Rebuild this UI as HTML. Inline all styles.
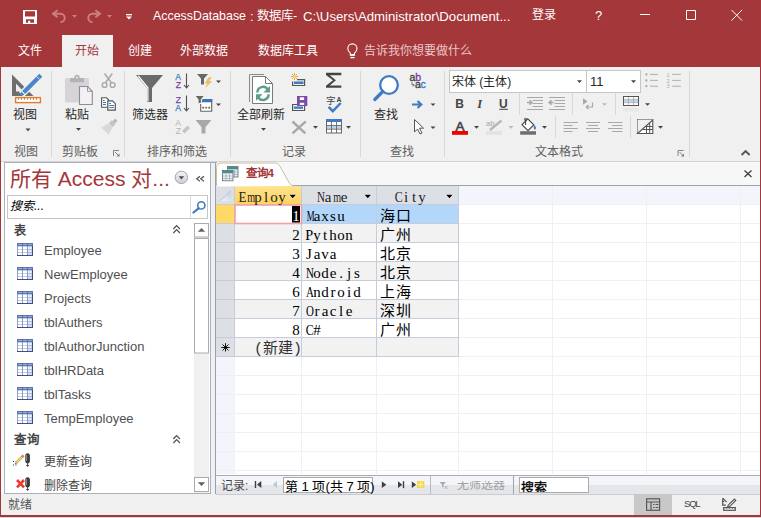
<!DOCTYPE html>
<html lang="zh-CN">
<head>
<meta charset="utf-8">
<style>
*{box-sizing:border-box;margin:0;padding:0}
html,body{width:761px;height:518px;overflow:hidden;background:#F0F0F0;font-family:"Liberation Sans",sans-serif;font-size:12px;color:#262626}
.a{position:absolute;white-space:nowrap;line-height:1}
.wt{color:#fff;font-size:12px}
.bt{font-size:12px;color:#262626}
.gl{font-size:12px;color:#5E5E5E}
.mono{font-family:"Liberation Mono",monospace;font-size:15px;letter-spacing:-1px;color:#000}
.mc{display:inline-block;transform-origin:50% 50%;width:8px;text-align:center;font-family:"Liberation Serif",serif;font-size:15px;letter-spacing:0}
.cj{font-size:15px;letter-spacing:1px}
svg{position:absolute;left:0;top:0}
</style>
</head>
<body>
<!-- title + tabs -->
<div class="a" style="left:0;top:0;width:761px;height:67px;background:#A4373A"></div>
<div class="a" style="left:62px;top:35px;width:51px;height:33px;background:#F0F0F0"></div>
<!-- ribbon -->
<div class="a" style="left:0;top:67px;width:761px;height:94px;background:#F0F0F0"></div>
<div class="a" style="left:0;top:161px;width:761px;height:1px;background:#D5D5D5"></div>
<!-- ribbon separators -->
<div class="a" style="left:51px;top:71px;width:1px;height:86px;background:#D8D8D8"></div>
<div class="a" style="left:124px;top:71px;width:1px;height:86px;background:#D8D8D8"></div>
<div class="a" style="left:230px;top:71px;width:1px;height:86px;background:#D8D8D8"></div>
<div class="a" style="left:360px;top:71px;width:1px;height:86px;background:#D8D8D8"></div>
<div class="a" style="left:444px;top:71px;width:1px;height:86px;background:#D8D8D8"></div>
<div class="a" style="left:689px;top:71px;width:1px;height:86px;background:#D8D8D8"></div>
<div class="a" style="left:519px;top:93px;width:1px;height:22px;background:#D8D8D8"></div>
<div class="a" style="left:572px;top:93px;width:1px;height:22px;background:#D8D8D8"></div>
<div class="a" style="left:615px;top:93px;width:1px;height:22px;background:#D8D8D8"></div>
<div class="a" style="left:555px;top:116px;width:1px;height:22px;background:#D8D8D8"></div>
<div class="a" style="left:630px;top:116px;width:1px;height:22px;background:#D8D8D8"></div>

<!-- nav pane -->
<div class="a" style="left:1px;top:162px;width:3px;height:332px;background:#FAFAFA"></div>
<div class="a" style="left:4px;top:162px;width:207px;height:332px;background:#fff;border-left:1px solid #A9B1BB;border-top:1px solid #A9B1BB;border-right:1px solid #A9B1BB;border-bottom:1px solid #A9B1BB"></div>
<!-- splitter -->
<div class="a" style="left:211px;top:162px;width:4px;height:332px;background:#EEF0F3"></div>
<!-- doc area -->
<div class="a" style="left:215px;top:162px;width:545px;height:332px;background:#fff;border-left:1px solid #98A0AA"></div>
<div class="a" style="left:211px;top:162px;width:6px;height:1px;background:#A3ABB5"></div>
<div class="a" style="left:217px;top:162px;width:543px;height:1px;background:#F9F9F9"></div>
<!-- tab strip -->
<div class="a" style="left:216px;top:163px;width:544px;height:23px;background:#F7F7F7;border-bottom:1px solid #9DA3AB"></div>

<!-- datasheet -->
<div class="a" style="left:216px;top:186px;width:544px;height:19px;background:#F4F5FC"></div>
<div class="a" style="left:216px;top:205px;width:19px;height:269px;background:#F4F5FC"></div>
<!-- header cells -->
<div class="a" style="left:216px;top:186px;width:19px;height:19px;background:#DCDFE4;border-right:1px solid #C6CDDA;border-bottom:1px solid #C6CDDA"></div>
<div class="a" style="left:235px;top:186px;width:67px;height:19px;background:linear-gradient(#FFE28E,#FFD460);border-right:1px solid #C6CDDA;border-bottom:1px solid #C6CDDA"></div>
<div class="a" style="left:302px;top:186px;width:75px;height:19px;background:#DCDFE4;border-right:1px solid #C6CDDA;border-bottom:1px solid #C6CDDA"></div>
<div class="a" style="left:377px;top:186px;width:82px;height:19px;background:#DCDFE4;border-right:1px solid #C6CDDA;border-bottom:1px solid #C6CDDA"></div>
<!-- rows -->
<div class="a" style="left:216px;top:205px;width:19px;height:19px;background:#FFD966;border-right:1px solid #C6CDDA;border-bottom:1px solid #C6CDDA"></div>
<div class="a" style="left:235px;top:205px;width:67px;height:19px;background:#FFFFFF;border-right:1px solid #C6CDDA;border-bottom:1px solid #C6CDDA"></div>
<div class="a" style="left:302px;top:205px;width:75px;height:19px;background:#B3D7FB;border-right:1px solid #C6CDDA;border-bottom:1px solid #C6CDDA"></div>
<div class="a" style="left:377px;top:205px;width:82px;height:19px;background:#B3D7FB;border-right:1px solid #C6CDDA;border-bottom:1px solid #C6CDDA"></div>
<div class="a" style="left:216px;top:224px;width:19px;height:19px;background:#DCDFE4;border-right:1px solid #C6CDDA;border-bottom:1px solid #C6CDDA"></div>
<div class="a" style="left:235px;top:224px;width:67px;height:19px;background:#F2F2F2;border-right:1px solid #C6CDDA;border-bottom:1px solid #C6CDDA"></div>
<div class="a" style="left:302px;top:224px;width:75px;height:19px;background:#F2F2F2;border-right:1px solid #C6CDDA;border-bottom:1px solid #C6CDDA"></div>
<div class="a" style="left:377px;top:224px;width:82px;height:19px;background:#F2F2F2;border-right:1px solid #C6CDDA;border-bottom:1px solid #C6CDDA"></div>
<div class="a" style="left:216px;top:243px;width:19px;height:19px;background:#DCDFE4;border-right:1px solid #C6CDDA;border-bottom:1px solid #C6CDDA"></div>
<div class="a" style="left:235px;top:243px;width:67px;height:19px;background:#FFFFFF;border-right:1px solid #C6CDDA;border-bottom:1px solid #C6CDDA"></div>
<div class="a" style="left:302px;top:243px;width:75px;height:19px;background:#FFFFFF;border-right:1px solid #C6CDDA;border-bottom:1px solid #C6CDDA"></div>
<div class="a" style="left:377px;top:243px;width:82px;height:19px;background:#FFFFFF;border-right:1px solid #C6CDDA;border-bottom:1px solid #C6CDDA"></div>
<div class="a" style="left:216px;top:262px;width:19px;height:19px;background:#DCDFE4;border-right:1px solid #C6CDDA;border-bottom:1px solid #C6CDDA"></div>
<div class="a" style="left:235px;top:262px;width:67px;height:19px;background:#F2F2F2;border-right:1px solid #C6CDDA;border-bottom:1px solid #C6CDDA"></div>
<div class="a" style="left:302px;top:262px;width:75px;height:19px;background:#F2F2F2;border-right:1px solid #C6CDDA;border-bottom:1px solid #C6CDDA"></div>
<div class="a" style="left:377px;top:262px;width:82px;height:19px;background:#F2F2F2;border-right:1px solid #C6CDDA;border-bottom:1px solid #C6CDDA"></div>
<div class="a" style="left:216px;top:281px;width:19px;height:19px;background:#DCDFE4;border-right:1px solid #C6CDDA;border-bottom:1px solid #C6CDDA"></div>
<div class="a" style="left:235px;top:281px;width:67px;height:19px;background:#FFFFFF;border-right:1px solid #C6CDDA;border-bottom:1px solid #C6CDDA"></div>
<div class="a" style="left:302px;top:281px;width:75px;height:19px;background:#FFFFFF;border-right:1px solid #C6CDDA;border-bottom:1px solid #C6CDDA"></div>
<div class="a" style="left:377px;top:281px;width:82px;height:19px;background:#FFFFFF;border-right:1px solid #C6CDDA;border-bottom:1px solid #C6CDDA"></div>
<div class="a" style="left:216px;top:300px;width:19px;height:19px;background:#DCDFE4;border-right:1px solid #C6CDDA;border-bottom:1px solid #C6CDDA"></div>
<div class="a" style="left:235px;top:300px;width:67px;height:19px;background:#F2F2F2;border-right:1px solid #C6CDDA;border-bottom:1px solid #C6CDDA"></div>
<div class="a" style="left:302px;top:300px;width:75px;height:19px;background:#F2F2F2;border-right:1px solid #C6CDDA;border-bottom:1px solid #C6CDDA"></div>
<div class="a" style="left:377px;top:300px;width:82px;height:19px;background:#F2F2F2;border-right:1px solid #C6CDDA;border-bottom:1px solid #C6CDDA"></div>
<div class="a" style="left:216px;top:319px;width:19px;height:19px;background:#DCDFE4;border-right:1px solid #C6CDDA;border-bottom:1px solid #C6CDDA"></div>
<div class="a" style="left:235px;top:319px;width:67px;height:19px;background:#FFFFFF;border-right:1px solid #C6CDDA;border-bottom:1px solid #C6CDDA"></div>
<div class="a" style="left:302px;top:319px;width:75px;height:19px;background:#FFFFFF;border-right:1px solid #C6CDDA;border-bottom:1px solid #C6CDDA"></div>
<div class="a" style="left:377px;top:319px;width:82px;height:19px;background:#FFFFFF;border-right:1px solid #C6CDDA;border-bottom:1px solid #C6CDDA"></div>
<div class="a" style="left:216px;top:338px;width:19px;height:19px;background:#DCDFE4;border-right:1px solid #C6CDDA;border-bottom:1px solid #C6CDDA"></div>
<div class="a" style="left:235px;top:338px;width:67px;height:19px;background:#F2F2F2;border-right:1px solid #C6CDDA;border-bottom:1px solid #C6CDDA"></div>
<div class="a" style="left:302px;top:338px;width:75px;height:19px;background:#F2F2F2;border-right:1px solid #C6CDDA;border-bottom:1px solid #C6CDDA"></div>
<div class="a" style="left:377px;top:338px;width:82px;height:19px;background:#F2F2F2;border-right:1px solid #C6CDDA;border-bottom:1px solid #C6CDDA"></div>
<div class="a" style="left:216px;top:375px;width:544px;height:1px;background:#EEF0F4"></div>
<div class="a" style="left:216px;top:394px;width:544px;height:1px;background:#EEF0F4"></div>
<div class="a" style="left:216px;top:413px;width:544px;height:1px;background:#EEF0F4"></div>
<div class="a" style="left:216px;top:432px;width:544px;height:1px;background:#EEF0F4"></div>
<div class="a" style="left:216px;top:451px;width:544px;height:1px;background:#EEF0F4"></div>
<div class="a" style="left:216px;top:470px;width:544px;height:1px;background:#EEF0F4"></div>
<div class="a" style="left:234px;top:357px;width:1px;height:117px;background:#EEF0F4"></div>
<div class="a" style="left:301px;top:357px;width:1px;height:117px;background:#EEF0F4"></div>
<div class="a" style="left:376px;top:357px;width:1px;height:117px;background:#EEF0F4"></div>
<div class="a" style="left:458px;top:357px;width:1px;height:117px;background:#EEF0F4"></div>
<div class="a" style="left:552px;top:186px;width:1px;height:288px;background:#EEF0F4"></div>
<div class="a" style="left:646px;top:186px;width:1px;height:288px;background:#EEF0F4"></div>
<div class="a" style="left:740px;top:186px;width:1px;height:288px;background:#EEF0F4"></div>
<div class="a" style="left:459px;top:204px;width:301px;height:1px;background:#EEF0F4"></div>
<div class="a" style="left:459px;top:223px;width:301px;height:1px;background:#EEF0F4"></div>
<div class="a" style="left:459px;top:242px;width:301px;height:1px;background:#EEF0F4"></div>
<div class="a" style="left:459px;top:261px;width:301px;height:1px;background:#EEF0F4"></div>
<div class="a" style="left:459px;top:280px;width:301px;height:1px;background:#EEF0F4"></div>
<div class="a" style="left:459px;top:299px;width:301px;height:1px;background:#EEF0F4"></div>
<div class="a" style="left:459px;top:318px;width:301px;height:1px;background:#EEF0F4"></div>
<div class="a" style="left:459px;top:337px;width:301px;height:1px;background:#EEF0F4"></div>
<div class="a" style="left:459px;top:356px;width:301px;height:1px;background:#EEF0F4"></div><svg width="761" height="518" viewBox="0 0 761 518">
<defs>
<linearGradient id="sa" x1="0" y1="1" x2="1" y2="0"><stop offset="0" stop-color="#F2F4F8"/><stop offset="1" stop-color="#C9CED8"/></linearGradient>
</defs>
<!-- select all triangle -->
<path d="M220 201L231 190.5V201z" fill="url(#sa)"/>
<path d="M220 201L231 190.5" stroke="#A8C0E0" stroke-width="0.8"/>
<!-- header arrows -->
<g fill="#000" stroke="#fff" stroke-width="0.8" paint-order="stroke">
  <path d="M289.5 194.8h6.4l-3.2 3.4z"/>
  <path d="M364.6 194.8h6.4l-3.2 3.4z"/>
  <path d="M446.2 194.8h6.4l-3.2 3.4z"/>
</g>
<!-- focus cell border -->
<rect x="235" y="205" width="66.5" height="18.5" fill="none" stroke="#F2A0A8" stroke-width="1.6"/>
<rect x="292" y="206" width="8" height="16.5" fill="#000"/>
<!-- asterisk -->
<g stroke="#111" stroke-width="1">
  <path d="M225.5 343.2v8.3 M221.3 347.5h8.4 M222.5 344.5l6 6 M228.5 344.5l-6 6"/>
</g>
</svg>
<div class="a mono" style="left:292px;top:209px;color:#fff;"><span class="mc">1</span></div>
<div class="a mono" style="left:305px;top:209px"><span class="mc" style="transform:scaleX(0.592)">M</span><span class="mc">a</span><span class="mc">x</span><span class="mc">s</span><span class="mc">u</span></div>
<div class="a mono cj" style="left:380px;top:210px">海口</div>
<div class="a mono" style="left:292px;top:228px;"><span class="mc">2</span></div>
<div class="a mono" style="left:305px;top:228px"><span class="mc" style="transform:scaleX(0.947)">P</span><span class="mc">y</span><span class="mc">t</span><span class="mc">h</span><span class="mc">o</span><span class="mc">n</span></div>
<div class="a mono cj" style="left:380px;top:229px">广州</div>
<div class="a mono" style="left:292px;top:247px;"><span class="mc">3</span></div>
<div class="a mono" style="left:305px;top:247px"><span class="mc">J</span><span class="mc">a</span><span class="mc">v</span><span class="mc">a</span></div>
<div class="a mono cj" style="left:380px;top:248px">北京</div>
<div class="a mono" style="left:292px;top:266px;"><span class="mc">4</span></div>
<div class="a mono" style="left:305px;top:266px"><span class="mc" style="transform:scaleX(0.730)">N</span><span class="mc">o</span><span class="mc">d</span><span class="mc">e</span><span class="mc">.</span><span class="mc">j</span><span class="mc">s</span></div>
<div class="a mono cj" style="left:380px;top:267px">北京</div>
<div class="a mono" style="left:292px;top:285px;"><span class="mc">6</span></div>
<div class="a mono" style="left:305px;top:285px"><span class="mc" style="transform:scaleX(0.730)">A</span><span class="mc">n</span><span class="mc">d</span><span class="mc">r</span><span class="mc">o</span><span class="mc">i</span><span class="mc">d</span></div>
<div class="a mono cj" style="left:380px;top:286px">上海</div>
<div class="a mono" style="left:292px;top:304px;"><span class="mc">7</span></div>
<div class="a mono" style="left:305px;top:304px"><span class="mc" style="transform:scaleX(0.730)">O</span><span class="mc">r</span><span class="mc">a</span><span class="mc">c</span><span class="mc">l</span><span class="mc">e</span></div>
<div class="a mono cj" style="left:380px;top:305px">深圳</div>
<div class="a mono" style="left:292px;top:323px;"><span class="mc">8</span></div>
<div class="a mono" style="left:305px;top:323px"><span class="mc" style="transform:scaleX(0.790)">C</span><span class="mc">#</span></div>
<div class="a mono cj" style="left:380px;top:324px">广州</div>
<div class="a mono cj" style="left:254px;top:342px;color:#333;letter-spacing:0">(新建)</div>


<!-- record nav bar -->
<div class="a" style="left:216px;top:475px;width:544px;height:19px;background:linear-gradient(#F4F5F8 0,#F4F5F8 50%,#E4E6EA 50%,#E4E6EA 100%);border-top:1px solid #A9AEB6"></div>
<div class="a" style="left:283px;top:477px;width:90px;height:16px;background:#fff;border:1px solid #ABABAB"></div>
<div class="a" style="left:430px;top:476px;width:1px;height:18px;background:#B8BCC2"></div>
<div class="a" style="left:513px;top:476px;width:1px;height:18px;background:#A0A4AA"></div>
<div class="a" style="left:519px;top:477px;width:70px;height:16px;background:#fff;border:1px solid #ABABAB"></div>

<!-- status bar -->
<div class="a" style="left:216px;top:494px;width:544px;height:1px;background:#C9CCD2"></div>
<div class="a" style="left:0;top:495px;width:761px;height:23px;background:#F0F0F0"></div>
<div class="a" style="left:0;top:494px;width:216px;height:1px;background:#F0F0F0"></div>
<div class="a" style="left:634px;top:494px;width:38px;height:22px;background:#C8C8C8"></div>

<!-- window borders -->
<div class="a" style="left:0;top:67px;width:1px;height:451px;background:#A4373A"></div>
<div class="a" style="left:760px;top:67px;width:1px;height:451px;background:#A4373A"></div>
<div class="a" style="left:0;top:515px;width:761px;height:2px;background:#A4373A"></div>
<div class="a" style="left:0;top:517px;width:761px;height:1px;background:#D8D8D8"></div>

<!-- font combos -->
<div class="a" style="left:449px;top:70px;width:138px;height:23px;background:#fff;border:1px solid #C6C6C6"></div>
<div class="a" style="left:586px;top:70px;width:55px;height:23px;background:#fff;border:1px solid #C6C6C6"></div>
<div class="a" style="left:7px;top:195px;width:201px;height:24px;border:1px solid #C6C6C6;background:#fff"></div>
<div class="a" style="left:190px;top:196px;width:1px;height:22px;background:#DADADA"></div>
<svg width="761" height="518" viewBox="0 0 761 518">
<!-- ===== title bar ===== -->
<rect x="23" y="10" width="14" height="14" fill="#fff"/>
<path d="M25 11.2h10v5.3H25z M26 19.2h8v3.6h-3.8v-2.1h-2.1v2.1H26z" fill="#A4373A"/>
<g fill="none" stroke="#CB7E80" stroke-width="2">
  <path d="M53 13.7h7.5a4.2 4.2 0 0 1 0 8.4"/>
  <path d="M57.6 10.3l-4.6 3.4 4.6 3.4"/>
  <path d="M100 13.7h-7.5a4.2 4.2 0 0 0 0 8.4"/>
  <path d="M95.4 10.3l4.6 3.4-4.6 3.4"/>
</g>
<path d="M72 15h5l-2.5 2.8z M107 15h5l-2.5 2.8z" fill="#CB7E80"/>
<rect x="126" y="14" width="6" height="1.3" fill="#fff"/>
<path d="M126 16.5h6l-3 3z" fill="#fff"/>
<g fill="none" stroke="#fff" stroke-width="1">
  <path d="M640 14.5h10"/>
  <path d="M686.5 10.5h9v9h-9z"/>
  <path d="M731.5 10l10.5 10.5 M742 10l-10.5 10.5"/>
</g>
<!-- lightbulb -->
<g fill="none" stroke="#fff" stroke-width="1.1" transform="translate(0.3,2.3)">
  <path d="M350 53v-2.2c-1.6-1.3-2.5-2.9-2.5-4.6a4.6 4.6 0 0 1 9.2 0c0 1.7-0.9 3.3-2.5 4.6V53z"/>
  <path d="M350.2 52.5h3.8" stroke-width="1.6"/>
  <path d="M350 55.3h4.2" stroke-width="1.3"/>
</g>
<!-- ===== Views: view icon ===== -->
<path d="M12 74.5L33.5 96H12z M16 83.5v8h7.5z" fill="#6E6E6E" fill-rule="evenodd"/>
<path d="M21.5 94.5L41.2 74.8" stroke="#F0F0F0" stroke-width="7"/>
<path d="M23.6 92.4L40.8 75.2" stroke="#4A86C8" stroke-width="4.3"/>
<path d="M20 96l1.2-4.6 3.4 3.4z" fill="#4A86C8"/>
<path d="M36.6 76.4l3 3" stroke="#F0F0F0" stroke-width="0.9"/>
<path d="M21.8 91l3.2 3.2" stroke="#F0F0F0" stroke-width="0.7"/>
<rect x="15.6" y="97.6" width="24.8" height="5" fill="#fff" stroke="#E07C2E" stroke-width="1.4"/>
<path d="M18.5 98v1.8 M21.5 98v1.8 M24.5 98v1.8 M27.5 98v1.8 M30.5 98v1.8 M33.5 98v1.8 M36.5 98v1.8" stroke="#E07C2E" stroke-width="1.1"/>
<path d="M25.5 128.5h5l-2.5 2.8z" fill="#444"/>

<!-- ===== clipboard ===== -->
<rect x="65" y="78" width="24" height="24.5" rx="1.5" fill="#D6D4D8"/>
<path d="M70 82.2v-2.8q0-1.3 1.3-1.3h11.4q1.3 0 1.3 1.3v2.8z" fill="#B3B3B3"/>
<circle cx="77" cy="77.3" r="2.6" fill="#B3B3B3"/>
<circle cx="77" cy="77.6" r="1" fill="#F0F0F0"/>
<path d="M79.5 86.5h8l4.8 4.8v13.2h-12.8z" fill="#F4F0F6" stroke="#8E8E8E" stroke-width="1.1"/>
<path d="M87.5 86.5v4.8h4.8" fill="none" stroke="#9A9A9A" stroke-width="1"/>
<path d="M76 128h5l-2.5 2.8z" fill="#444"/>
<!-- scissors -->
<g fill="none" stroke="#A8A8A8" stroke-width="1.4">
  <path d="M104.5 73.5l7 9.5 M112.3 73.5l-7 9.5"/>
  <circle cx="104.6" cy="85" r="2.4"/>
  <circle cx="112.6" cy="85" r="2.4"/>
</g>
<!-- copy -->
<path d="M101.6 97.8H106.5L108.5 99.8V107.2H101.6Z" fill="#fff" stroke="#555" stroke-width="1.1"/>
<path d="M107.8 100.9H112.5L115.3 103.7V110.1H107.8Z" fill="#fff" stroke="#555" stroke-width="1.2"/>
<g stroke="#3A74B8" stroke-width="1">
  <path d="M103 100.5h1.8 M103 102.5h3 M103 104.5h3"/>
  <path d="M109.2 103.5h1.8 M109.2 105.5h4.8 M109.2 107.6h4.8"/>
</g>
<!-- format painter -->
<path d="M112.6 121.2l2.6-2.6 2.2 2.2-2.6 2.6z" fill="#B8B8B8"/>
<path d="M108.8 123.2l3-3 3.8 3.8-3 3z" fill="#C4C4C4"/>
<path d="M101.2 127.4l7.4-4 4 4-4.2 7z" fill="#D8D8D8"/>
<!-- ===== sort & filter ===== -->
<path d="M136 75h27l-11 13v14h-5V88z" fill="#6B6B6B"/>
<path d="M138.3 76l9.6 11.8v13.8" fill="none" stroke="#fff" stroke-width="1.2"/>
<!-- AZ -->
<g font-family="Liberation Sans" font-size="8.6" stroke-width="0.25">
  <text x="175.3" y="80" fill="#3B7CC4" stroke="#3B7CC4">A</text>
  <text x="175.8" y="88" fill="#7A3FA0" stroke="#7A3FA0">Z</text>
  <text x="175.8" y="102.7" fill="#7A3FA0" stroke="#7A3FA0">Z</text>
  <text x="175.3" y="110.8" fill="#3B7CC4" stroke="#3B7CC4">A</text>
  <text x="175.3" y="126" fill="#B4B4B4">A</text>
  <text x="175.8" y="134" fill="#B4B4B4">Z</text>
</g>
<g fill="none" stroke="#505050" stroke-width="1.1">
  <path d="M186.5 73.5v14 M184 85l2.5 2.8 2.5-2.8"/>
  <path d="M186.5 95.5v15 M184 108l2.5 2.8 2.5-2.8"/>
</g>
<path d="M182 131l5.5-5.5 2.5 2.5-5.5 5.5z" fill="#C4C4C4"/>
<!-- filter lightning -->
<path d="M197 74h11l-4 4.5v6h-3v-6z" fill="#666"/>
<path d="M208.6 77.3h3.2l-2.6 3.8h2.8l-7 7.6 2.4-5.2h-2.6z" fill="#EDBD66"/>
<path d="M216 80.5h5l-2.5 2.6z M216 103.5h5l-2.5 2.6z" fill="#444"/>
<!-- advanced filter -->
<rect x="201" y="101.5" width="10.5" height="10" fill="#fff"/>
<path d="M200.7 104v7.2h11V99.5" fill="none" stroke="#666" stroke-width="1.1"/>
<path d="M202.5 99h9.8v3.2h-10.8z" fill="#3F73B3"/>
<path d="M195.8 96h7.8l-2.8 3.4v3.6h-2.2v-3.6z" fill="#666" stroke="#F0F0F0" stroke-width="0.8" paint-order="stroke"/>
<rect x="202.3" y="106.8" width="1.8" height="1.8" fill="#666"/>
<rect x="205.3" y="106.8" width="1.8" height="1.8" fill="#666"/>
<rect x="208.3" y="106.8" width="1.8" height="1.8" fill="#666"/>
<!-- toggle filter disabled -->
<path d="M195.5 120h16l-6 7v6.5h-4V127z" fill="#A8A8A8"/>

<!-- ===== records ===== -->
<path d="M249.5 102V74.5h14.5" fill="none" stroke="#8A8A8A" stroke-width="1"/>
<path d="M252.5 76.5h13l7 7v20h-20z" fill="#fff" stroke="#7A7A7A" stroke-width="1"/>
<path d="M265.5 76.5v7h7" fill="none" stroke="#7A7A7A" stroke-width="1"/>
<g fill="none" stroke="#5E9E88" stroke-width="2.5">
  <path d="M257.4 92.5A5.6 5.6 0 0 1 267.85 89.7"/>
  <path d="M268.6 94.3A5.6 5.6 0 0 1 258.15 97.1"/>
</g>
<path d="M270 86.1V92.5h-6.6z M256 100.7V94.3h6.6z" fill="#5E9E88"/>
<path d="M261 128h5l-2.5 2.8z" fill="#444"/>
<!-- new record -->
<g stroke="#E8A838" stroke-width="1">
  <path d="M294.5 73v7 M291 76.5h7 M292 74l5 5 M297 74l-5 5"/>
</g>
<circle cx="294.5" cy="76.5" r="1.5" fill="#F5D79A"/>
<path d="M297 79.6h7.6v5.9h-12v-4" fill="none" stroke="#555" stroke-width="1.2"/>
<rect x="294" y="81.5" width="9.5" height="2.5" fill="#3F7BC0"/>
<!-- save record -->
<path d="M297 104.5h-4.4v6h12v-5" fill="none" stroke="#555" stroke-width="1.2"/>
<rect x="294" y="106.5" width="9" height="2.3" fill="#3F7BC0"/>
<rect x="297" y="96" width="10.3" height="10" fill="#7B4BA6"/>
<rect x="299.8" y="97.3" width="4.3" height="2.7" fill="#fff"/>
<rect x="299.8" y="102.8" width="4.4" height="2.1" fill="#fff"/>
<!-- delete disabled -->
<path d="M292.5 121.5l12.8 11.8 M305.8 121.3l-13.3 12" stroke="#A8A8A8" stroke-width="2.4"/>
<path d="M313 126h5l-2.5 2.8z" fill="#444"/>
<!-- sigma -->
<path d="M326 72.8h15.3v2.4h-11.6l6.2 5.1-6.2 5.1h11.6v2.4H326v-2.1l7-5.4-7-5.4z" fill="#444"/>
<!-- spelling -->
<text x="326" y="104.2" font-size="9.5" fill="#444" font-family="Liberation Sans">字</text>
<text x="336.4" y="101.6" font-size="6.8" font-weight="bold" fill="#444" font-family="Liberation Sans">A</text>
<path d="M328.6 106.8l4.2 4.4 7.9-8.2" fill="none" stroke="#3F7BC0" stroke-width="2.4"/>
<!-- more table -->
<rect x="326.5" y="119.5" width="15" height="13.5" fill="#fff" stroke="#666" stroke-width="1"/>
<rect x="326.5" y="119" width="15" height="3" fill="#3F7BC0"/>
<rect x="327" y="126" width="14" height="2.8" fill="#BFD4EA"/>
<path d="M327 125.5h14 M327 129.2h14 M331.5 122v11 M336.5 122v11" stroke="#666" stroke-width="0.9"/>
<path d="M346 126h5l-2.5 2.8z" fill="#444"/>

<!-- ===== find ===== -->
<circle cx="389" cy="85" r="8.8" fill="#fff" stroke="#3F7BC0" stroke-width="2.3"/>
<path d="M382.8 91.5l-8 8" stroke="#3F7BC0" stroke-width="3.2" stroke-linecap="round"/>
<g font-family="Liberation Sans" font-size="10.5" stroke-width="0.35">
<text x="409.6" y="81" fill="#444" stroke="#444">a</text>
<text x="415.3" y="81" fill="#7A3FA0" stroke="#7A3FA0">b</text>
<text x="415" y="88.4" fill="#444" stroke="#444">a</text>
<text x="420.6" y="88.4" fill="#3F7BC0" stroke="#3F7BC0">c</text>
</g>
<path d="M412 82v3h2.5 M412.8 84l1.5 1.2-1.5 1.2" fill="none" stroke="#3F7BC0" stroke-width="0.9"/>
<path d="M412 104.5h9 M417.5 101l3.8 3.5-3.8 3.5" fill="none" stroke="#3F7BC0" stroke-width="2.2"/>
<path d="M430.5 103.5h5l-2.5 2.6z" fill="#444"/>
<path d="M414.5 119.5v12.5l3-3 2.5 5 2-1-2.5-4.8h4z" fill="#fff" stroke="#444" stroke-width="0.9"/>
<path d="M430.5 126.5h5l-2.5 2.6z" fill="#444"/>
</svg>
<svg width="761" height="518" viewBox="0 0 761 518">
<!-- ===== text formatting ===== -->
<path d="M577 80.3h5l-2.5 2.6z M631 80.3h5l-2.5 2.6z" fill="#444"/>
<!-- bullets -->
<g fill="#A8A8A8">
  <circle cx="646.4" cy="74.4" r="1.1"/><circle cx="646.4" cy="80.4" r="1.1"/><circle cx="646.4" cy="86.2" r="1.1"/>
</g>
<path d="M650 74.4h8 M650 80.4h8 M650 86.2h8 M672.2 74.4h8.6 M672.2 80.4h8.6 M672.2 86.2h8.6" stroke="#A8A8A8" stroke-width="0.9"/>
<g font-family="Liberation Sans" font-size="5" fill="#A8A8A8">
  <text x="666.7" y="76.5">1</text><text x="666.7" y="82.5">2</text><text x="666.7" y="88.3">3</text>
</g>
<!-- B I U -->
<text x="455.2" y="108" font-family="Liberation Sans" font-weight="bold" font-size="12" fill="#444">B</text>
<text x="477.3" y="108" font-family="Liberation Serif" font-style="italic" font-weight="bold" font-size="12.5" fill="#444">I</text>
<text x="499" y="108" font-family="Liberation Sans" font-weight="bold" font-size="12" fill="#444">U</text>
<rect x="499.3" y="108.8" width="8.6" height="1" fill="#444"/>
<!-- indent icons -->
<g stroke="#A8A8A8" stroke-width="1">
  <path d="M527 97.5h16 M532.5 100.5h10.5 M532.5 103.5h10.5 M532.5 106.5h10.5 M527 109.5h16"/>
  <path d="M549 97.5h16 M554.5 100.5h10.5 M554.5 103.5h10.5 M554.5 106.5h10.5 M549 109.5h16"/>
</g>
<path d="M527 102.5h4 M529.5 100.3l2.3 2.2-2.3 2.2" fill="none" stroke="#A8A8A8" stroke-width="1.6"/>
<path d="M553.5 102.5h-4 M551.5 100.3l-2.3 2.2 2.3 2.2" fill="none" stroke="#A8A8A8" stroke-width="1.6"/>
<!-- RTL -->
<path d="M583 98.3v6.5l4.5-3.25z" fill="#A8A8A8"/>
<path d="M592.5 102.5v4.5h-6 M588.5 105l-2.2 2 2.2 2" fill="none" stroke="#A8A8A8" stroke-width="1.2"/>
<path d="M602 103.2h5l-2.5 2.6z" fill="#B8B8B8"/>
<!-- gridlines -->
<rect x="623.5" y="96.5" width="15" height="9" fill="#fff" stroke="#555" stroke-width="1"/>
<rect x="624" y="99.6" width="14" height="2.8" fill="#BFD4EA"/>
<path d="M624 99.3h14 M624 102.7h14 M628.5 97v8.5 M633.5 97v8.5" stroke="#999" stroke-width="0.6"/>
<rect x="623" y="108" width="16" height="3.5" fill="#E8E8E8"/>
<path d="M645 103.2h5l-2.5 2.6z" fill="#444"/>
<!-- font color -->
<text x="455.6" y="130.8" font-family="Liberation Sans" font-size="13.5" fill="#444" stroke="#444" stroke-width="0.6">A</text>
<rect x="452" y="131" width="16" height="3.8" fill="#F00000"/>
<path d="M474 126h5l-2.5 2.8z" fill="#444"/>
<!-- highlight disabled -->
<text x="485.8" y="125.8" font-family="Liberation Sans" font-size="8" fill="#A8A8A8">ab</text>
<path d="M490 130l11.5-9.5" stroke="#B8B8B8" stroke-width="2.4"/>
<rect x="486" y="131" width="16" height="3.8" fill="#E6E1E8"/>
<path d="M508.5 126h5l-2.5 2.8z" fill="#B8B8B8"/>
<!-- fill bucket -->
<path d="M527.8 118.8l6 6-5.8 5.8-6-6z" fill="#fff" stroke="#444" stroke-width="1.2" stroke-linejoin="round"/>
<path d="M525.6 119.2v5.8" stroke="#444" stroke-width="1.1"/>
<circle cx="525.6" cy="119.4" r="1.2" fill="none" stroke="#444" stroke-width="0.9"/>
<path d="M533.5 124.5c1.9 1.3 2.8 2.8 2.4 4.2-0.3 0.9-1.3 1-1.9 0.5z" fill="#3F7BC0"/>
<rect x="520.2" y="131.2" width="15.8" height="3.5" fill="#6E6E6E"/>
<path d="M542 126h5l-2.5 2.8z" fill="#444"/>
<!-- align -->
<g stroke="#A8A8A8" stroke-width="1">
  <path d="M563.6 122.5h14.2 M563.6 125.5h9 M563.6 128.5h14.2 M563.6 131.5h9"/>
  <path d="M586 122.5h14 M588 125.5h10 M586 128.5h14 M588 131.5h10"/>
  <path d="M608 122.5h14.4 M612 125.5h10.4 M608 128.5h14.4 M612 131.5h10.4"/>
</g>
<!-- alternate row color -->
<path d="M637.5 119.5h15.5" stroke="#444" stroke-width="1" stroke-dasharray="1 1"/>
<path d="M637.5 119.5v14" stroke="#444" stroke-width="1" stroke-dasharray="1 1"/>
<path d="M652.8 120v13.5h-15.3z" fill="#fff" stroke="#555" stroke-width="1.1"/>
<path d="M646.5 126v7.5 M649.7 123v10.5 M643 129.5h9.8 M646 126.5h6.8" stroke="#555" stroke-width="1"/>
<path d="M658 126h5l-2.5 2.8z" fill="#444"/>
<!-- launchers -->
<g fill="none" stroke="#777" stroke-width="0.9">
  <path d="M113.5 156v-5.5h5.5 M115 152l4 4"/>
  <path d="M678 156v-5.5h5.5 M679.5 152l4 4"/>
</g>
<path d="M116.5 156.5h3v-3z M681 156.5h3v-3z" fill="#777"/>
<!-- collapse ribbon -->
<path d="M741.6 155l4-4 4 4" fill="none" stroke="#555" stroke-width="1.9"/>
</svg>
<svg width="761" height="518" viewBox="0 0 761 518">
<defs>
  <g id="tbl">
    <rect x="0" y="0" width="16" height="13" fill="#8A9CC8"/>
    <rect x="0" y="0" width="16" height="3" fill="#5B74AC"/>
    <path d="M1.3 1.5h3.4 M6.3 1.5h3.4 M11.3 1.5h3.4" stroke="#A8B8DC" stroke-width="0.9"/>
    <rect x="15" y="3" width="1" height="10" fill="#3E4E78"/>
    <rect x="0" y="12" width="16" height="1" fill="#3E4E78"/>
    <g fill="#fff">
      <rect x="1" y="3.5" width="4" height="2.5"/><rect x="6" y="3.5" width="4" height="2.5"/><rect x="11" y="3.5" width="3.8" height="2.5" fill="#E6EEFF"/>
      <rect x="1" y="6.5" width="4" height="2.5"/><rect x="6" y="6.5" width="4" height="2.5"/><rect x="11" y="6.5" width="3.8" height="2.5" fill="#DCE6FF"/>
      <rect x="1" y="9.5" width="4" height="2.5"/><rect x="6" y="9.5" width="4" height="2.5"/><rect x="11" y="9.5" width="3.8" height="2.5" fill="#D0DCFF"/>
    </g>
  </g>
  <linearGradient id="circ" x1="0" y1="0" x2="0" y2="1"><stop offset="0" stop-color="#F4F4F4"/><stop offset="1" stop-color="#CFCFD4"/></linearGradient>
  <linearGradient id="tabg" x1="0" y1="0" x2="0" y2="1"><stop offset="0" stop-color="#FFFFFF"/><stop offset="1" stop-color="#FFFFFF"/></linearGradient>
  <linearGradient id="hdrY" x1="0" y1="0" x2="0" y2="1"><stop offset="0" stop-color="#FFE28A"/><stop offset="1" stop-color="#FFD35C"/></linearGradient>
</defs>
<!-- nav pane header -->
<circle cx="181.4" cy="177.4" r="6.2" fill="url(#circ)" stroke="#A0A4AC" stroke-width="1"/>
<path d="M178.6 176.3h5.6l-2.8 3.3z" fill="#4A4A5E"/>
<path d="M200 176.2l-3.3 2.6 3.3 2.6 M204 176.2l-3.3 2.6 3.3 2.6" fill="none" stroke="#4A4E58" stroke-width="1.2"/>
<!-- search magnifier -->
<circle cx="201.3" cy="205.4" r="3.6" fill="none" stroke="#3F7BC0" stroke-width="1.6"/>
<path d="M198.6 208.3l-5.2 4.2" stroke="#3F7BC0" stroke-width="2.2" stroke-linecap="round"/>
<!-- group collapse ^^ -->
<path d="M173.3 229l3.3-3.3 3.3 3.3 M173.3 233l3.3-3.3 3.3 3.3" fill="none" stroke="#4A4E58" stroke-width="1.2"/>
<path d="M173.3 439l3.3-3.3 3.3 3.3 M173.3 443l3.3-3.3 3.3 3.3" fill="none" stroke="#4A4E58" stroke-width="1.2"/>
<!-- scrollbar -->
<rect x="194" y="223" width="15" height="270" fill="#F0F0F0"/>
<rect x="194.5" y="223.5" width="14" height="13.5" fill="#fff" stroke="#ABABAB" stroke-width="1"/>
<path d="M197.8 231.8h7.4l-3.7-3.7z" fill="#606060"/>
<rect x="194.5" y="238.5" width="14" height="114.5" fill="#fff" stroke="#ABABAB" stroke-width="1"/>
<rect x="194.5" y="477.5" width="14" height="14" fill="#fff" stroke="#ABABAB" stroke-width="1"/>
<path d="M197.8 482.3h7.4l-3.7 3.7z" fill="#606060"/>
<!-- table icons -->
<use href="#tbl" x="17" y="243"/>
<use href="#tbl" x="17" y="267"/>
<use href="#tbl" x="17" y="291"/>
<use href="#tbl" x="17" y="315"/>
<use href="#tbl" x="17" y="339"/>
<use href="#tbl" x="17" y="363"/>
<use href="#tbl" x="17" y="387"/>
<use href="#tbl" x="17" y="411"/>
<!-- update query icon -->
<g fill="#333"><rect x="13" y="461" width="1" height="1"/><rect x="13" y="464.5" width="1" height="1"/><rect x="15.5" y="464.5" width="1" height="1"/><rect x="15.5" y="461" width="1" height="1" fill="#777"/></g>
<path d="M16 463l6.5-6.5" stroke="#D4B848" stroke-width="2.6"/>
<path d="M16 463l6.5-6.5" stroke="#F3E08A" stroke-width="1"/>
<path d="M21.8 457.2l1.8-1.8" stroke="#D07A7A" stroke-width="2.6"/>
<path d="M15 464.2l1.5-1.5" stroke="#7A8AA8" stroke-width="1.5"/>
<!-- pins -->
<g>
  <path d="M25.3 455.5a2.3 2.3 0 0 1 4.6 0v6.5l-1.3 1.3h-2l-1.3-1.3z" fill="#3A3A3A"/>
  <path d="M26.6 455v6" stroke="#9A9A9A" stroke-width="0.9"/>
  <path d="M27.6 463v3 M26.3 465l1.3 1.5 1.3-1.5" fill="none" stroke="#333" stroke-width="0.9"/>
  <path d="M25.3 479.5a2.3 2.3 0 0 1 4.6 0v6.5l-1.3 1.3h-2l-1.3-1.3z" fill="#3A3A3A"/>
  <path d="M26.6 479v6" stroke="#9A9A9A" stroke-width="0.9"/>
  <path d="M27.6 487v3 M26.3 489l1.3 1.5 1.3-1.5" fill="none" stroke="#333" stroke-width="0.9"/>
</g>
<path d="M17 480l7 7.3 M24 480l-7 7.3" stroke="#F03A2A" stroke-width="2.6"/>

<!-- doc tab -->
<path d="M216 186.5V167.5q0-4.5 4.5-4.5h55q2.5 0 4 2.5l9.5 17q1.5 2.5 4.5 3.5z" fill="#fff"/>
<path d="M216.5 186V167.5q0-4.5 4.5-4.5h54.5q2.5 0 4 2.5l9.5 17q1.5 2.5 4.5 3.5" fill="none" stroke="#CDBB9E" stroke-width="1"/>
<!-- tab icon -->
<g>
  <rect x="227.5" y="166.5" width="10.5" height="10.5" fill="#E8ECEC" stroke="#5A6A7A" stroke-width="0.8"/>
  <rect x="227.5" y="166.5" width="10.5" height="2.8" fill="#4E8C8C"/>
  <path d="M231 169.5v7.5 M234.5 169.5v7.5 M227.5 172h10.5 M227.5 174.5h10.5" stroke="#8A9AA8" stroke-width="0.6"/>
  <rect x="222.5" y="170.5" width="10.5" height="10.3" fill="#F2F4F4" stroke="#5A6A7A" stroke-width="0.8"/>
  <rect x="222.5" y="170.5" width="10.5" height="2.8" fill="#4E8C8C"/>
  <path d="M226 173.5v7.3 M229.5 173.5v7.3 M222.5 176h10.5 M222.5 178.5h10.5" stroke="#8A9AA8" stroke-width="0.6"/>
</g>
<!-- close doc X -->
<path d="M744.5 170.5l7 6.5 M751.5 170.5l-7 6.5" stroke="#444" stroke-width="1.4"/>
</svg>
<svg width="761" height="518" viewBox="0 0 761 518">
<!-- record nav -->
<g fill="#3C3F48">
  <rect x="254.8" y="481" width="1.4" height="7"/>
  <path d="M261.3 481v7l-4.3-3.5z"/>
  <path d="M381.8 481.2v6.9l4.5-3.45z"/>
  <path d="M398 481.2v6.9l4.3-3.45z"/>
  <rect x="402.8" y="481.2" width="1.4" height="6.9"/>
  <path d="M411.8 481.2v6.9l4.3-3.45z"/>
</g>
<path d="M277 481v7l-4-3.5z" fill="#C2C5CB"/>
<rect x="417" y="481" width="7.3" height="7" fill="#F7D23A"/>
<path d="M420.6 481v7 M417 484.5h7.3 M418 482l5.3 5 M423.3 482l-5.3 5" stroke="#FBEFA8" stroke-width="0.8"/>
<path d="M439.6 482h6.4l-2.5 2.8v2.5h-1.4v-2.5z" fill="#A8AAB0"/>
<path d="M444.5 486l3 3 M447.5 486l-3 3" stroke="#A8AAB0" stroke-width="0.8"/>
<!-- status icons -->
<g fill="none" stroke="#5A5A5A" stroke-width="1.2">
  <rect x="646.6" y="498.8" width="13" height="11.5"/>
  <path d="M647 502h12.3 M651 502v8"/>
  <path d="M653 504.5h1.5 M655.5 504.5h3 M653 507.5h1.5 M655.5 507.5h3" stroke-width="1"/>
</g>
<g fill="none" stroke="#555" stroke-width="1.2">
  <path d="M722.7 498.2v7h3.2 M722.7 498.2l4 4"/>
  <path d="M722.7 501.5h1.5"/>
  <path d="M728.2 505.2l6.2-6.2 1.4 1.4-6.2 6.2-2.2 0.8z" stroke-width="1.1"/>
  <rect x="723.7" y="507.6" width="11.6" height="2.7"/>
  <path d="M726.5 507.6v1 M729.5 507.6v1 M732.5 507.6v1" stroke-width="0.9"/>
</g>
</svg>


<!-- TEXT -->
<div class="a wt" style="left:153px;top:10px;font-size:12.4px">AccessDatabase</div>
<div class="a wt" style="left:250px;top:10px;font-size:13px">:</div>
<div class="a wt" style="left:257px;top:10px;font-size:12.4px">数据库-</div>
<div class="a wt" style="left:303px;top:10px;font-size:13.2px">C:\Users\Administrator\Document...</div>
<div class="a wt" style="left:532px;top:9px">登录</div>
<div class="a wt" style="left:595px;top:9px;font-size:13px">?</div>

<div class="a wt" style="left:18px;top:45px">文件</div>
<div class="a wt" style="left:75px;top:45px;color:#A4373A">开始</div>
<div class="a wt" style="left:128px;top:45px">创建</div>
<div class="a wt" style="left:180px;top:45px">外部数据</div>
<div class="a wt" style="left:258px;top:45px">数据库工具</div>
<div class="a wt" style="left:364px;top:45px;color:#E9C9CA">告诉我你想要做什么</div>

<div class="a bt" style="left:13px;top:109px">视图</div>
<div class="a bt" style="left:65px;top:109px">粘贴</div>
<div class="a bt" style="left:132px;top:109px">筛选器</div>
<div class="a bt" style="left:237px;top:109px">全部刷新</div>
<div class="a bt" style="left:374px;top:109px">查找</div>

<div class="a gl" style="left:14px;top:146px">视图</div>
<div class="a gl" style="left:62px;top:146px">剪贴板</div>
<div class="a gl" style="left:147px;top:146px">排序和筛选</div>
<div class="a gl" style="left:282px;top:146px">记录</div>
<div class="a gl" style="left:390px;top:146px">查找</div>
<div class="a gl" style="left:535px;top:146px">文本格式</div>

<div class="a bt" style="left:452px;top:76px">宋体 (主体)</div>
<div class="a bt" style="left:590px;top:75px;font-size:13px">11</div>

<!-- nav pane text -->
<div class="a" style="left:10px;top:168px;font-size:21px;color:#A4373A">所有 Access 对...</div>
<div class="a" style="left:10px;top:200px;font-style:italic;color:#000">搜索...</div>
<div class="a" style="left:14px;top:225px;font-weight:bold;color:#444;font-size:12px">表</div>
<div class="a" style="left:14px;top:434px;font-weight:bold;color:#444;font-size:12.5px">查询</div>

<div class="a" style="left:44px;top:244px;font-size:13px;color:#505050">Employee</div>
<div class="a" style="left:44px;top:268px;font-size:13px;color:#505050">NewEmployee</div>
<div class="a" style="left:44px;top:292px;font-size:13px;color:#505050">Projects</div>
<div class="a" style="left:44px;top:316px;font-size:13px;color:#505050">tblAuthers</div>
<div class="a" style="left:44px;top:340px;font-size:13px;color:#505050">tblAuthorJunction</div>
<div class="a" style="left:44px;top:364px;font-size:13px;color:#505050">tblHRData</div>
<div class="a" style="left:44px;top:388px;font-size:13px;color:#505050">tblTasks</div>
<div class="a" style="left:44px;top:412px;font-size:13px;color:#505050">TempEmployee</div>
<div class="a" style="left:44px;top:456px;color:#444">更新查询</div>
<div class="a" style="left:44px;top:480px;color:#444">删除查询</div>

<div class="a gl" style="left:8px;top:499px;color:#555">就绪</div>

<!-- doc tab text -->
<div class="a" style="left:246px;top:168px;font-weight:bold;color:#A4373A;font-size:11.5px;letter-spacing:-0.3px">查询4</div>

<!-- headers text -->
<div class="a mono" style="left:238px;top:190px;color:#222"><span class="mc" style="transform:scaleX(0.863)">E</span><span class="mc" style="transform:scaleX(0.677)">m</span><span class="mc">p</span><span class="mc">l</span><span class="mc">o</span><span class="mc">y</span></div><div class="a mono" style="left:316px;top:190px;color:#222"><span class="mc" style="transform:scaleX(0.730)">N</span><span class="mc">a</span><span class="mc" style="transform:scaleX(0.677)">m</span><span class="mc">e</span></div><div class="a mono" style="left:394px;top:190px;color:#222"><span class="mc" style="transform:scaleX(0.790)">C</span><span class="mc">i</span><span class="mc">t</span><span class="mc">y</span></div>

<!-- record nav text -->
<div class="a" style="left:221px;top:480px;color:#444">记录:</div>
<div class="a" style="left:285px;top:480px;color:#000;font-size:13px">第 1 项(共 7 项)</div>
<div class="a" style="left:457px;top:481px;width:52px;height:10px;overflow:hidden"><div class="a" style="left:0;top:-2px;color:#A0A0A0;font-size:12px">无筛选器</div></div>
<div class="a" style="left:520px;top:478px;width:60px;height:14px;overflow:hidden"><div class="a" style="left:1px;top:3px;color:#000;font-size:13px;-webkit-text-stroke:0.3px #000">搜索</div></div>
<div class="a" style="left:684px;top:499px;color:#444;font-size:9.5px;letter-spacing:-1.2px">SQL</div>
</body>
</html>
